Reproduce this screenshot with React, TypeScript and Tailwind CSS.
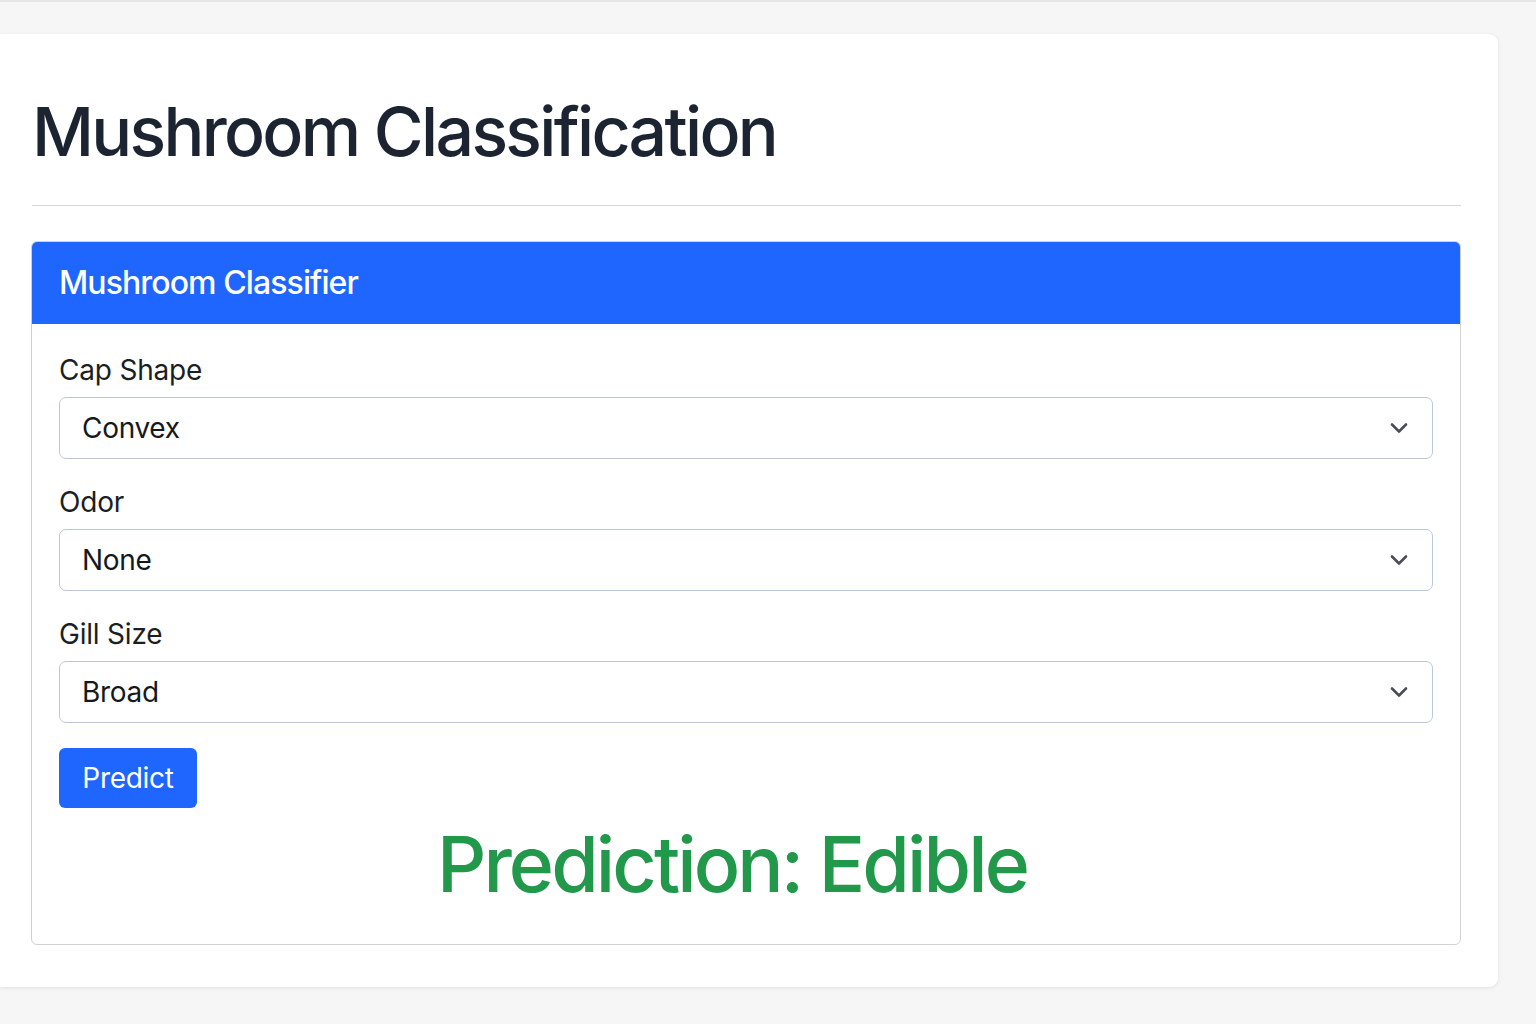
import React from "react";

const font = { fontFamily: "Inter, 'Noto Sans', 'Liberation Sans', sans-serif" };

function Chevron() {
  return (
    <svg width="20" height="14" viewBox="0 0 20 14" className="shrink-0">
      <path d="M3 3.5 L10 10.5 L17 3.5" fill="none" stroke="#4a4d52" strokeWidth="2.6" strokeLinecap="round" strokeLinejoin="round" />
    </svg>
  );
}

function Field({ label, value, first }: { label: string; value: string; first?: boolean }) {
  return (
    <div className={first ? "" : "mt-[25px]"}>
      <div className="text-[28px] leading-[36px] text-[#1b1f24] mb-[9px] tracking-[-0.2px]">{label}</div>
      <div className="h-[62px] border border-[#b9c8d6] rounded-[7px] flex items-center justify-between pl-[22px] pr-[23px] bg-white">
        <span className="text-[28px] text-[#15191e] tracking-[-0.3px]">{value}</span>
        <Chevron />
      </div>
    </div>
  );
}

export default function App() {
  return (
    <div style={font} className="min-h-screen bg-[#f6f6f6] border-t-2 border-[#e6e6e6] pt-[32px] pb-[37px]">
      <div className="w-[1498px] bg-white rounded-r-[9px] shadow-[0_1px_4px_rgba(0,0,0,0.09)] pl-[32px] pr-[37px] pt-[56px] pb-[42px]">
        <h1 className="text-[68px] leading-[82px] text-[#1b2430] font-medium tracking-[-2.7px]">Mushroom Classification</h1>
        <div className="mt-[33px] h-px bg-[#d6d6d6]" />
        <div className="mt-[35px] -ml-px border border-[#d2d2d2] rounded-[6px] overflow-hidden">
          <div className="bg-[#1f66ff] h-[83px] flex items-center pl-[27px] -mt-px">
            <span className="text-[32px] font-medium text-white tracking-[-0.9px]">Mushroom Classifier</span>
          </div>
          <div className="pl-[27px] pr-[27px] pt-[28px] pb-[34px]">
            <Field label="Cap Shape" value="Convex" first />
            <Field label="Odor" value="None" />
            <Field label="Gill Size" value="Broad" />
            <button className="mt-[25px] h-[60px] w-[138px] bg-[#1f66ff] rounded-[6px] text-white text-[28px] tracking-[-0.3px] flex items-center justify-center">
              Predict
            </button>
            <div className="mt-[10px] text-center text-[77px] leading-[92px] text-[#22994a] font-medium tracking-[-2.9px] pr-[28px]">
              Prediction: Edible
            </div>
          </div>
        </div>
      </div>
    </div>
  );
}
